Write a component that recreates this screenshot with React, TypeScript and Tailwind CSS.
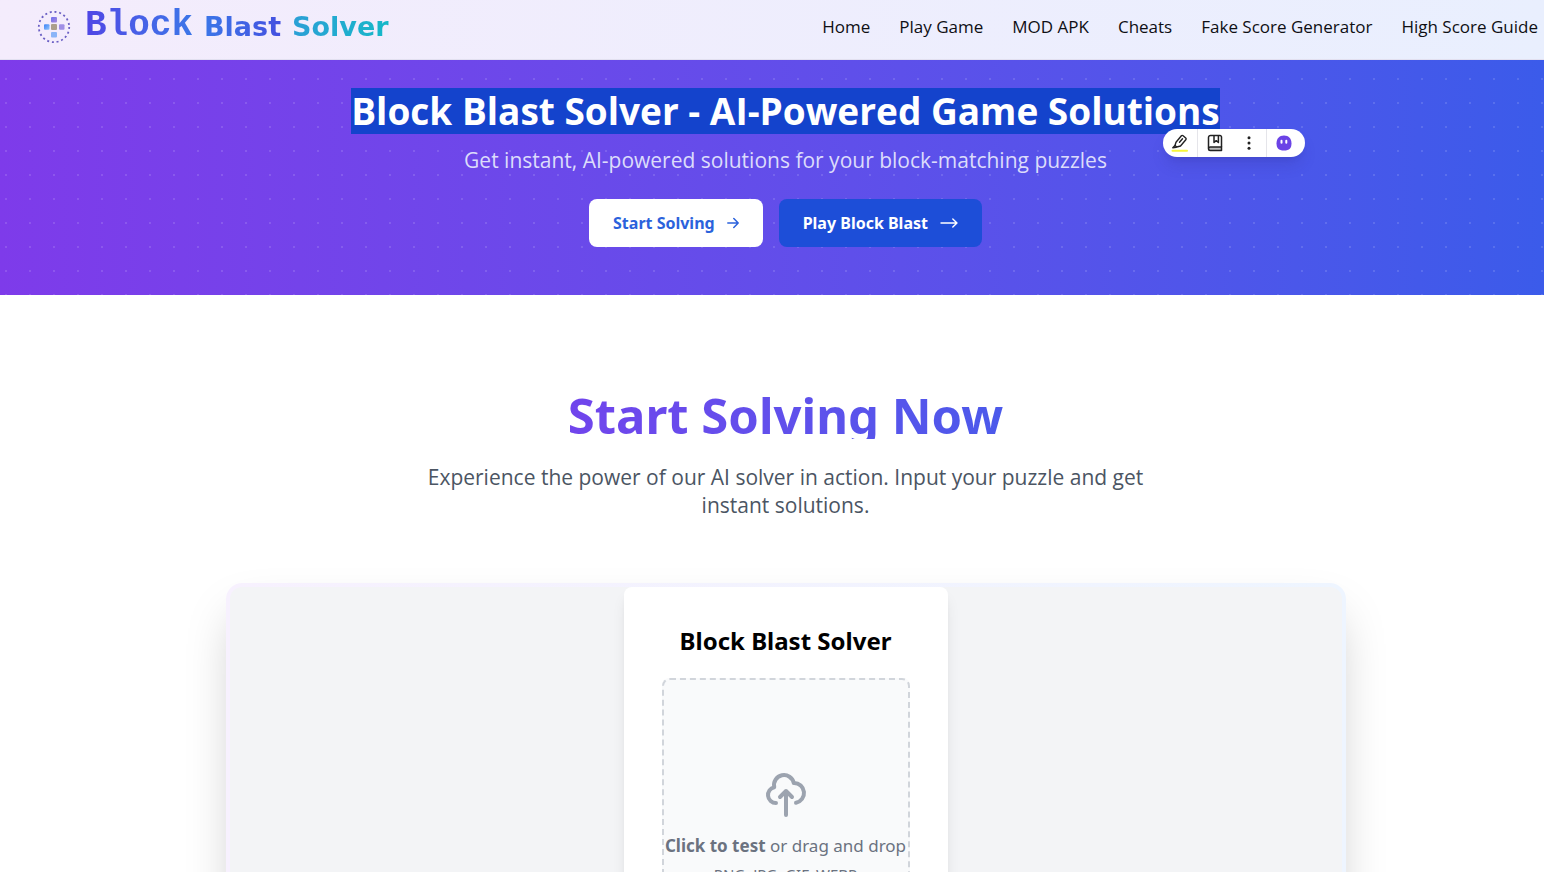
import React from "react";

const navLinks = ["Home", "Play Game", "MOD APK", "Cheats", "Fake Score Generator", "High Score Guide"];

function LogoMark() {
  return (
    <svg viewBox="0 0 34 34" className="size-[34px] shrink-0" aria-hidden="true">
      <defs>
        <linearGradient id="tile" x1="0" y1="0" x2="1" y2="1">
          <stop offset="0" stopColor="#6d6cf0" />
          <stop offset="1" stopColor="#a78bda" />
        </linearGradient>
        <linearGradient id="tileBlue" x1="0" y1="0" x2="1" y2="1">
          <stop offset="0" stopColor="#3b82f6" />
          <stop offset="1" stopColor="#93c5fd" />
        </linearGradient>
      </defs>
      <circle cx="17" cy="17" r="15.2" fill="none" stroke="#6a5fc4" strokeWidth="1.8" strokeDasharray="2 2.775" />
      <rect x="14" y="7" width="6" height="5.5" rx="1" fill="url(#tile)" />
      <rect x="7" y="14.2" width="5.5" height="5.5" rx="1" fill="url(#tileBlue)" />
      <rect x="14" y="14" width="6" height="6" rx="1" fill="#ac9f8c" />
      <rect x="22" y="14.2" width="5.5" height="5.5" rx="1" fill="#a08fe6" />
      <rect x="14" y="22" width="6" height="5.5" rx="1" fill="#8ab4f8" />
    </svg>
  );
}

function Header() {
  return (
    <header className="flex h-[60px] items-center justify-between border-b border-[#e2e0f0] bg-linear-to-r from-[#f4ecfc] to-[#e9effe] pr-[6px] pb-[6px] pl-[37px]">
      <a href="#home" className="flex items-center gap-[14px]">
        <LogoMark />
        <span className="flex items-center gap-[11px] font-['DejaVu_Sans'] text-[27px] leading-8 font-bold">
          <span className="bg-linear-to-r from-[#4f46e5] to-[#3b76e8] bg-clip-text pb-[2px] font-['Liberation_Mono'] text-4xl leading-9 text-transparent">
            Block
          </span>
          <span className="bg-linear-to-r from-[#3b76e8] to-[#4450e0] bg-clip-text text-transparent">Blast</span>
          <span className="bg-linear-to-r from-[#2b9fd6] to-[#14b8c8] bg-clip-text text-transparent">Solver</span>
        </span>
      </a>
      <nav className="flex gap-[29px] font-['Open_Sans'] text-[17px] whitespace-nowrap text-[#0f0f14]">
        {navLinks.map((label) => (
          <a key={label} href="#">
            {label}
          </a>
        ))}
      </nav>
    </header>
  );
}

function SelectionToolbar() {
  return (
    <div className="absolute top-[41px] -right-[85px] flex h-7 w-[142px] items-center rounded-full bg-white shadow-lg shadow-indigo-900/20">
      <button type="button" aria-label="Highlight" className="flex h-7 w-[35px] items-center justify-center border-r border-[#e5e5ea]">
        <svg viewBox="0 0 18 18" className="size-[18px]" fill="none" stroke="#222" strokeWidth="1.4" strokeLinejoin="round" strokeLinecap="round">
          <path d="M5 8.2 10.4 1.8a1.2 1.2 0 0 1 1.7-.1l2.6 2.3a1.2 1.2 0 0 1 .1 1.7L9.5 12l-3.7 1L4 11.4z" />
          <path d="M8.5 8.3l3-3.5M4 11.4l-2.2 2.4 3.4-.5" />
          <path d="M1.5 16.7h14.5" stroke="#f8f53a" strokeWidth="2" />
        </svg>
      </button>
      <button type="button" aria-label="Save" className="flex h-7 w-[34px] items-center justify-center">
        <svg viewBox="0 0 18 18" className="size-[18px]" fill="none" stroke="#222" strokeWidth="1.5" strokeLinejoin="round">
          <path d="M15.5 13V3a1.5 1.5 0 0 0-1.5-1.5H4.5A2 2 0 0 0 2.5 3.5v11" />
          <path d="M15.5 13H4.3a1.75 1.75 0 0 0 0 3.5H15.5z" fill="#bbb" />
          <path d="M8 1.5v7l2.2-1.8 2.2 1.8v-7" />
        </svg>
      </button>
      <button type="button" aria-label="More" className="flex h-7 w-[35px] items-center justify-center border-r border-[#e5e5ea]">
        <svg viewBox="0 0 16 16" className="size-4" fill="#222">
          <circle cx="8" cy="2.7" r="1.5" />
          <circle cx="8" cy="8" r="1.5" />
          <circle cx="8" cy="13.3" r="1.5" />
        </svg>
      </button>
      <button type="button" aria-label="Assistant" className="flex h-7 w-[34px] items-center justify-center">
        <svg viewBox="0 0 16 16" className="size-4">
          <path d="M8 .5c4.8 0 7.5 3 7.5 8 0 4.500-2 7-7.500 7s-7.500-2.500-7.500-7c0-5 2.700-8 7.500-8z" fill="#6b43e6" />
          <rect x="4.5" y="4.8" width="2" height="4" rx="1" fill="#fff" />
          <rect x="9.3" y="4.8" width="2" height="4" rx="1" fill="#fff" />
        </svg>
      </button>
    </div>
  );
}

function Hero() {
  return (
    <section className="bg-linear-to-r from-[#7e3bea] to-[#3b5bea]">
      <div className="flex flex-col items-center bg-[radial-gradient(circle,rgba(255,255,255,0.13)_1px,transparent_1px)] bg-size-[24px_24px] bg-position-[-6px_7px] pt-7 pb-12 pl-[27px]">
        <h1 className="relative font-['Open_Sans'] text-[37px] leading-[46px] font-bold whitespace-nowrap text-white">
          <span className="block bg-[#1443cc]">Block Blast Solver - AI-Powered Game Solutions</span>
          <SelectionToolbar />
        </h1>
        <p className="mt-3 font-['Open_Sans'] text-[21px] leading-7 text-[#dcdcfb]">
          Get instant, AI-powered solutions for your block-matching puzzles
        </p>
        <div className="mt-[25px] flex gap-4 text-base font-bold">
          <button type="button" className="flex h-12 items-center gap-3 rounded-lg bg-white px-6 text-[#2b62dc]">
            Start Solving
            <svg viewBox="0 0 12 12" className="size-3" fill="none" stroke="currentColor" strokeWidth="1.5" strokeLinecap="round" strokeLinejoin="round">
              <path d="M.8 6h10.4M6.8 1.5 11.2 6l-4.4 4.5" />
            </svg>
          </button>
          <button type="button" className="flex h-12 items-center gap-3 rounded-lg bg-[#1d4ed8] px-6 text-white">
            Play Block Blast
            <svg viewBox="0 0 18 12" className="h-3 w-[18px]" fill="none" stroke="currentColor" strokeWidth="1.4" strokeLinecap="round" strokeLinejoin="round">
              <path d="M1 6h16M12.8 2 17 6l-4.2 4" />
            </svg>
          </button>
        </div>
      </div>
    </section>
  );
}

function UploadCard() {
  return (
    <div className="flex w-[324px] flex-col items-center rounded-lg bg-white px-[38px] pt-9 pb-10 shadow-lg">
      <h3 className="text-2xl leading-9 font-bold whitespace-nowrap text-black">Block Blast Solver</h3>
      <label className="mt-[19px] flex h-[320px] w-full cursor-pointer flex-col items-center rounded-lg border-2 border-dashed border-[#d1d5db] bg-[#f9fafb] pt-[91px] text-[#6b7280]">
        <svg viewBox="0 0 24 24" className="size-12 overflow-visible text-[#9ca3af]" fill="none" stroke="currentColor" strokeWidth="2" strokeLinecap="round" strokeLinejoin="round">
          <path d="M7 16a4 4 0 01-.88-7.903A5 5 0 1115.9 6L16 6a5 5 0 011 9.9M15 13l-3-3m0 0l-3 3m3-3v12" />
        </svg>
        <span className="mt-[13px] text-[17px] leading-7 whitespace-nowrap">
          <strong className="font-bold">Click to test</strong> or drag and drop
        </span>
        <span className="mt-[2px] text-[15px] leading-6 whitespace-nowrap">PNG, JPG, GIF, WEBP</span>
        <input type="file" accept="image/*" className="sr-only" />
      </label>
    </div>
  );
}

export default function App() {
  return (
    <div className="overflow-hidden bg-white font-['Noto_Sans','Open_Sans',sans-serif]">
      <Header />
      <main>
        <Hero />
        <section className="flex flex-col items-center pt-24 pb-24 pl-[27px]">
          <div className="flex w-full max-w-3xl flex-col items-center text-center">
            <h2 className="w-full bg-linear-to-r from-[#7c3aed] to-[#3560ea] bg-clip-text text-[49px] leading-[48px] font-bold text-transparent">
              Start Solving Now
            </h2>
            <p className="mt-6 max-w-[740px] font-['Open_Sans'] text-[21px] leading-7 text-[#4b5563]">
              Experience the power of our AI solver in action. Input your puzzle and get instant solutions.
            </p>
          </div>
          <div className="mt-16 w-full max-w-[1120px] rounded-2xl bg-linear-to-r from-[#f7f1fe] to-[#eef5ff] p-1 shadow-2xl">
            <div className="flex justify-center rounded-xl bg-[#f3f4f6]">
              <UploadCard />
            </div>
          </div>
        </section>
      </main>
    </div>
  );
}
